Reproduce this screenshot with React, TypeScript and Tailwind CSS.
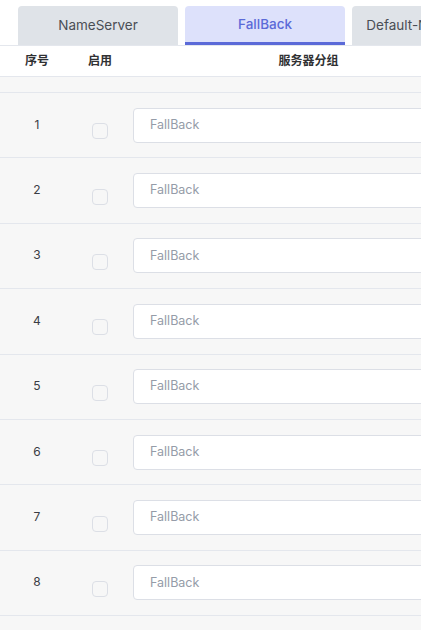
import React from "react";

const tabs = ["NameServer", "FallBack", "Default-NameServer"];
const rows = [1, 2, 3, 4, 5, 6, 7, 8];

export default function App() {
  return (
    <div
      className="w-[421px] h-[630px] overflow-hidden bg-[#f7f7f7] text-[#303133]"
      style={{ fontFamily: "Inter, 'Noto Sans CJK SC', sans-serif" }}
    >
      {/* tabs */}
      <div className="bg-white pt-[6px] pl-[18px] flex gap-[7px] border-b border-[#e4e7ed] overflow-hidden">
        {tabs.map((t) => {
          const active = t === "FallBack";
          return (
            <div
              key={t}
              className={`shrink-0 w-[160px] h-[39px] rounded-t-[4px] flex items-center justify-center text-[13.5px] ${
                active
                  ? "bg-[#dde1fb] text-[#5b6ad8] font-medium border-b-[3px] border-[#5b6ad8]"
                  : "bg-[#dfe3e8] text-[#4a4e55]"
              }`}
            >
              {t}
            </div>
          );
        })}
      </div>

      {/* header */}
      <div className="bg-white h-[31px] flex items-center text-[12px] font-bold text-[#303133] border-b border-[#e4e7ed]">
        <div className="shrink-0 w-[74px] text-center">序号</div>
        <div className="shrink-0 w-[52px] text-center">启用</div>
        <div className="flex-1 text-center pl-[70px]">服务器分组</div>
      </div>
      <div className="h-[16px] border-b border-[#e4e7ed]" />

      {rows.map((n) => (
        <div
          key={n}
          className="h-[65.4px] flex items-center border-b border-[#e4e7ed]"
        >
          <div className="shrink-0 w-[74px] text-center text-[12px] text-[#3a3d44] -mt-[1px]">
            {n}
          </div>
          <div className="shrink-0 w-[52px] flex justify-center pt-[12px]">
            <div className="w-[16px] h-[16px] rounded-[4px] border border-[#dcdfe6] bg-[#f7f7f7]" />
          </div>
          <div className="shrink-0 ml-[7px] w-[320px] h-[35px] rounded-[4px] border border-[#dcdfe6] bg-white flex items-center pl-[16px] text-[12.5px] text-[#959ca8]">
            FallBack
          </div>
        </div>
      ))}
    </div>
  );
}
